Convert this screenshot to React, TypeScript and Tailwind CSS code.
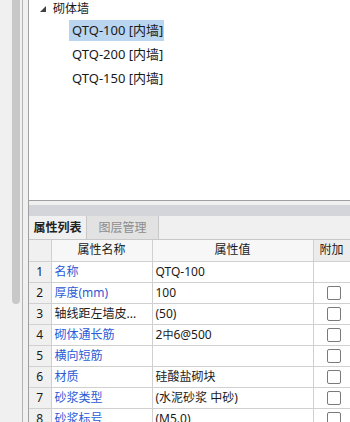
import { ReactNode } from "react";

const font = { fontFamily: '"Noto Sans", "Noto Sans CJK SC", sans-serif' };

type Row = { name: string; value: ReactNode; blue: boolean; check: boolean };

const rows: Row[] = [
    { name: "名称", value: "QTQ-100", blue: true, check: false },
    { name: "厚度(mm)", value: "100", blue: true, check: true },
    { name: "轴线距左墙皮...", value: "(50)", blue: false, check: true },
    {
        name: "砌体通长筋",
        value: (
            <>
                2<span className="text-[11px]">中</span>6@500
            </>
        ),
        blue: true,
        check: true,
    },
    { name: "横向短筋", value: "", blue: true, check: true },
    { name: "材质", value: "硅酸盐砌块", blue: true, check: true },
    { name: "砂浆类型", value: "(水泥砂浆 中砂)", blue: true, check: true },
    { name: "砂浆标号", value: "(M5.0)", blue: true, check: true },
];

const items = ["QTQ-100 [内墙]", "QTQ-200 [内墙]", "QTQ-150 [内墙]"];

const App = () => {
    return (
        <div
            className="w-[350px] h-[422px] overflow-hidden bg-[#f0f0f0] flex text-[12px] text-[#1a1a1a]"
            style={font}
        >
            {/* left scroll strip */}
            <div className="w-[23px] shrink-0 border-r border-[#b4b4b4] pl-[12px]">
                <div className="w-[8px] h-[304px] rounded-b-full bg-[#c8c8c8]" />
            </div>
            <div className="w-[6px] shrink-0 border-r border-[#a0a0a0]" />

            <div className="flex-1 flex flex-col min-w-0">
                {/* tree */}
                <div className="h-[201px] shrink-0 bg-white border-b border-[#a0a0a0] overflow-hidden">
                    <div className="flex items-center h-[16px] mt-[1px] pl-[11px]">
                        <svg width="6" height="6" viewBox="0 0 6 6" className="mr-[7px]">
                            <polygon points="6,0 6,6 0,6" fill="#404040" />
                        </svg>
                        <span className="leading-none">砌体墙</span>
                    </div>
                    <div className="flex flex-col pl-[40px] pt-[3px] gap-[3px]">
                        {items.map((t, i) => (
                            <div
                                key={t}
                                className={
                                    i === 0
                                        ? "h-[21px] w-[95px] flex items-center pl-[3px] bg-[#bad5ef] text-[13px]"
                                        : "h-[21px] w-[95px] flex items-center pl-[3px] text-[13px]"
                                }
                            >
                                {t}
                            </div>
                        ))}
                    </div>
                </div>

                <div className="h-[4px] shrink-0" />
                <div className="h-[11px] shrink-0 bg-[#d4d5da]" />

                {/* tabs */}
                <div className="h-[24px] shrink-0 flex border-b border-[#c8c8c8]">
                    <div className="w-[57px] flex items-center justify-center font-bold text-[#222]">
                        属性列表
                    </div>
                    <div className="w-[73px] flex items-center justify-center bg-[#e2e2e2] border-x border-[#c8c8c8] text-[#8c8c8c]">
                        图层管理
                    </div>
                </div>

                {/* property table */}
                <table className="table-fixed border-collapse w-[350px]">
                    <colgroup>
                        <col className="w-[22px]" />
                        <col className="w-[101px]" />
                        <col className="w-[161px]" />
                        <col className="w-[66px]" />
                    </colgroup>
                    <thead>
                        <tr className="h-[21px] bg-[#f7f7f7]">
                            <th className="border-r border-b border-[#d0d0d0] bg-[#f0f0f0]" />
                            <th className="border-r border-b border-[#d0d0d0] font-normal">
                                属性名称
                            </th>
                            <th className="border-r border-b border-[#d0d0d0] font-normal">
                                属性值
                            </th>
                            <th className="border-b border-[#d0d0d0] font-normal text-left pl-[6px] bg-[#ececec]">
                                附加
                            </th>
                        </tr>
                    </thead>
                    <tbody>
                        {rows.map((r, i) => (
                            <tr key={i} className="h-[21px] bg-white">
                                <td className="border-r border-b border-[#d0d0d0] bg-[#f0f0f0] text-center p-0">
                                    {i + 1}
                                </td>
                                <td
                                    className={
                                        r.blue
                                            ? "border-r border-b border-[#d0d0d0] pl-[3px] text-[#2b5bd6] whitespace-nowrap overflow-hidden"
                                            : "border-r border-b border-[#d0d0d0] pl-[3px] whitespace-nowrap overflow-hidden"
                                    }
                                >
                                    {r.name}
                                </td>
                                <td className="border-r border-b border-[#d0d0d0] pl-[3px] whitespace-nowrap overflow-hidden">
                                    {r.value}
                                </td>
                                <td className="border-b border-[#d0d0d0] pl-[13px]">
                                    {r.check && (
                                        <div className="w-[14px] h-[14px] rounded-[2px] border border-[#7a7a7a] bg-white" />
                                    )}
                                </td>
                            </tr>
                        ))}
                    </tbody>
                </table>
            </div>
        </div>
    );
};

export default App;
